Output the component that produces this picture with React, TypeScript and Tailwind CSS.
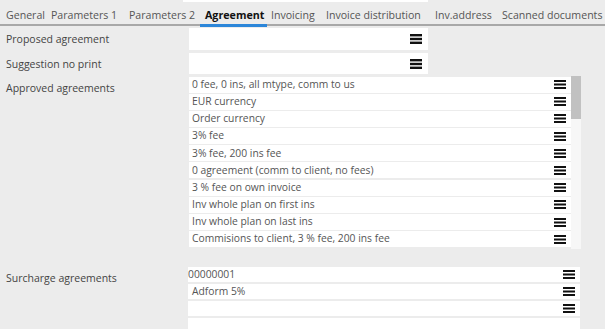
import React from "react";

const Menu = ({ thick = false }: { thick?: boolean }) => (
  <svg width="12" height={thick ? 10 : 9} viewBox={thick ? "0 0 12 10" : "0 0 12 9"} className="shrink-0">
    {thick ? (
      <>
        <rect x="0" y="0" width="12" height="2.4" fill="#111" />
        <rect x="0" y="3.8" width="12" height="2.4" fill="#111" />
        <rect x="0" y="7.6" width="12" height="2.4" fill="#111" />
      </>
    ) : (
      <>
        <rect x="0" y="0" width="12" height="2" fill="#111" />
        <rect x="0" y="3.5" width="12" height="2" fill="#111" />
        <rect x="0" y="7" width="12" height="2" fill="#111" />
      </>
    )}
  </svg>
);

const tabs = [
  { t: "General", w: "w-[45px]" },
  { t: "Parameters 1", w: "w-[78px]" },
  { t: "Parameters 2", w: "w-[76px]" },
  { t: "Agreement", w: "w-[66px]", active: true },
  { t: "Invoicing", w: "w-[55px]" },
  { t: "Invoice distribution", w: "w-[109px]" },
  { t: "Inv.address", w: "w-[67px]" },
  { t: "Scanned documents", w: "flex-1" },
];

const approved = [
  "0 fee, 0 ins, all mtype, comm to us",
  "EUR currency",
  "Order currency",
  "3% fee",
  "3% fee, 200 ins fee",
  "0 agreement (comm to client, no fees)",
  "3 % fee on own invoice",
  "Inv whole plan on first ins",
  "Inv whole plan on last ins",
  "Commisions to client, 3 % fee, 200 ins fee",
];

export default function App() {
  return (
    <div
      className="w-[605px] h-[329px] bg-[#ececec] overflow-hidden text-[10.5px]"
      style={{ fontFamily: '"Open Sans", "Noto Sans", sans-serif' }}
    >
      <div className="h-[2px] ml-[183px] w-[245px] bg-white" />
      {/* Tabs */}
      <div className="relative h-[24px] flex items-end whitespace-nowrap border-b-[2px] border-[#a8a8a8] pl-[6px]">
        {tabs.map((tab) => (
          <div
            key={tab.t}
            className={`${tab.w} shrink-0 relative h-full flex items-center pt-[5px] ${
              tab.active ? "text-[#111] font-bold text-[10.7px]" : "text-[#555] text-[10.6px]"
            }`}
          >
            {tab.t}
            {tab.active && (
              <div className="absolute left-[-5px] w-[67px] bottom-[-3px] h-[3px] bg-[#2c86d9]" />
            )}
          </div>
        ))}
      </div>

      {/* Proposed agreement */}
      <div className="flex mt-[2px] h-[22px]">
        <div className="w-[189px] pl-[6px] pt-[2px] flex items-center text-[#444]">Proposed agreement</div>
        <div className="w-[239px] bg-white flex items-center justify-end pr-[6px]">
          <Menu thick />
        </div>
      </div>
      <div className="flex mt-[3px] h-[21px]">
        <div className="w-[189px] pl-[6px] pt-[2px] flex items-center text-[#444]">Suggestion no print</div>
        <div className="w-[239px] bg-white flex items-center justify-end pr-[6px]">
          <Menu thick />
        </div>
      </div>

      {/* Approved agreements */}
      <div className="flex mt-[2px]">
        <div className="w-[189px] pl-[6px] pt-[3px] text-[#444] leading-[18px]">Approved agreements</div>
        <div className="flex">
          <div className="w-[382px] flex flex-col gap-[1.2px] pt-[0.5px]">
            {approved.map((a) => (
              <div key={a} className="h-[16px] bg-white flex items-center justify-between pl-[3px] pr-[5px] text-[#555] text-[10.3px] whitespace-nowrap">
                <span>{a}</span>
                <Menu />
              </div>
            ))}
          </div>
          <div className="w-[10px] bg-[#f7f7f7] h-[173px]">
            <div className="h-[43px] bg-[#c1c1c1]" />
          </div>
        </div>
      </div>

      {/* Surcharge agreements */}
      <div className="flex mt-[18px]">
        <div className="w-[188px] pl-[6px] pt-[2px] text-[#444] leading-[18px]">Surcharge agreements</div>
        <div className="w-[392px] flex flex-col gap-[2px]">
          <div className="h-[15px] bg-white flex items-center justify-between pr-[5px] text-[#555] text-[10.3px]">
            <span>00000001</span>
            <Menu />
          </div>
          <div className="h-[15px] bg-white flex items-center justify-between pl-[4px] pr-[5px] text-[#555] text-[10.3px]">
            <span>Adform 5%</span>
            <Menu />
          </div>
          <div className="h-[15px] bg-white flex items-center justify-end pr-[5px]">
            <Menu />
          </div>
          <div className="h-[15px] bg-white" />
        </div>
      </div>
    </div>
  );
}
